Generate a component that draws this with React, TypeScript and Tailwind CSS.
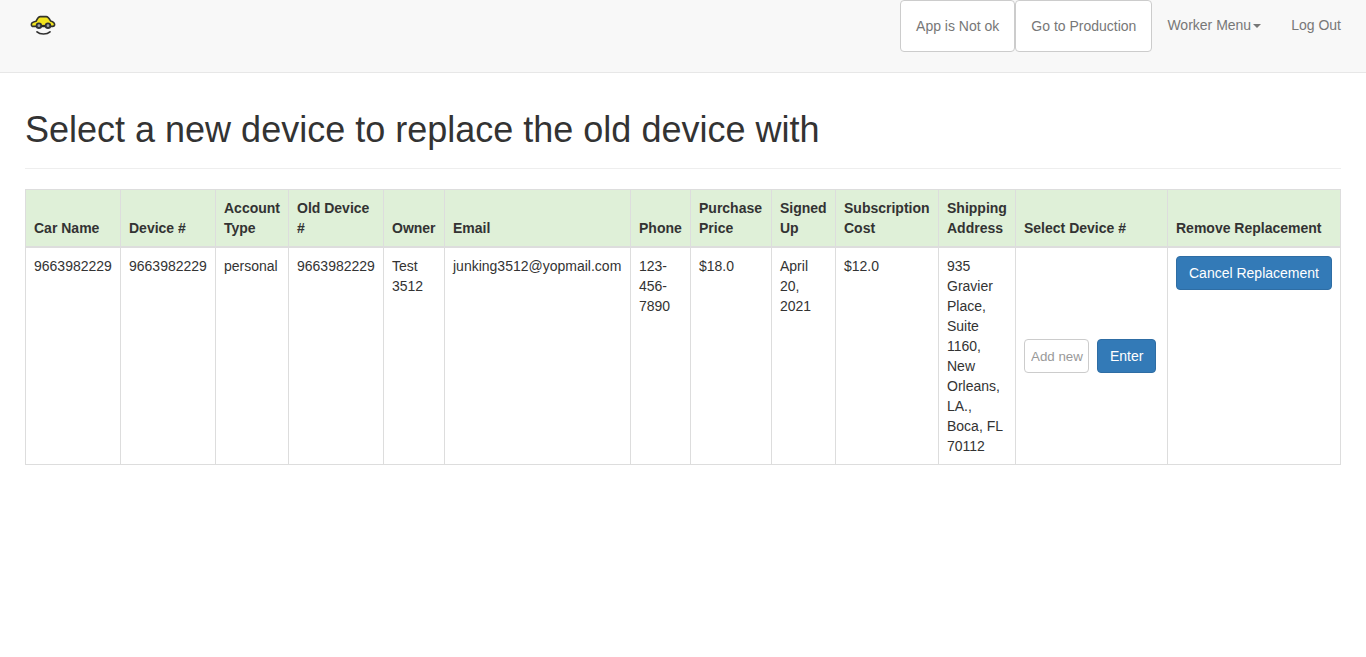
import React from "react";

const columns = [
  { label: "Car Name", width: "w-[95px]" },
  { label: "Device #", width: "w-[95px]" },
  { label: "Account Type", width: "w-[73px]" },
  { label: "Old Device #", width: "w-[95px]" },
  { label: "Owner", width: "w-[61px]" },
  { label: "Email", width: "w-[186px]" },
  { label: "Phone", width: "w-[60px]" },
  { label: "Purchase Price", width: "w-[81px]" },
  { label: "Signed Up", width: "w-[64px]" },
  { label: "Subscription Cost", width: "w-[103px]" },
  { label: "Shipping Address", width: "w-[77px]" },
  { label: "Select Device #", width: "w-[152px]" },
  { label: "Remove Replacement", width: "w-[173px]" },
];

const values = [
  "9663982229",
  "9663982229",
  "personal",
  "9663982229",
  "Test 3512",
  "junking3512@yopmail.com",
  "123-456-7890",
  "$18.0",
  "April 20, 2021",
  "$12.0",
  "935 Gravier Place, Suite 1160, New Orleans, LA., Boca, FL 70112",
];

function Logo() {
  return (
    <svg className="block h-[21px] w-[26px]" viewBox="0 0 26 21" fill="none">
      <path
        d="M1.4 9.4C1.4 7.4 3.2 6.9 6 6.3C7.4 3.2 8.4 1.6 10.4 1.6H16.2C18.2 1.6 19.4 3.6 20.6 6C23.2 6.8 24.6 7.6 24.6 9.6C24.6 11.2 24.2 11.4 22.6 11.4H3.4C1.8 11.4 1.4 11 1.4 9.4Z"
        fill="#f2e41f"
        stroke="#33332c"
        strokeWidth="1.6"
      />
      <path d="M10.5 10.8h6" stroke="#2b2b26" strokeWidth="1.8" />
      <circle cx="8.9" cy="10.7" r="2.3" fill="#9da1a4" stroke="#2f3133" strokeWidth="1.8" />
      <circle cx="18" cy="10.7" r="2.3" fill="#9da1a4" stroke="#2f3133" strokeWidth="1.8" />
      <path d="M7 16.8C10 19.7 17 19.7 20 16.8" stroke="#303030" strokeWidth="1.7" strokeLinecap="round" />
    </svg>
  );
}

function Navbar() {
  const boxed =
    "h-[52px] rounded border border-[#ccc] bg-white px-[15px] text-sm leading-5 text-[#777]";
  return (
    <nav className="flex h-[73px] items-start justify-between border-b border-[#e7e7e7] bg-[#f8f8f8] pr-[10px] pl-[30px]">
      <a href="#" className="pt-[15px]" aria-label="Home">
        <Logo />
      </a>
      <div className="flex items-start text-sm leading-5 text-[#777]">
        <button className={boxed}>App is Not ok</button>
        <button className={boxed}>Go to Production</button>
        <a href="#" className="flex items-center px-[15px] py-[15px]">
          Worker Menu
          <svg className="mt-[2px] ml-[2px] h-1 w-2" viewBox="0 0 8 4">
            <path d="M0 0h8L4 4Z" fill="#777" />
          </svg>
        </a>
        <a href="#" className="px-[15px] py-[15px]">
          Log Out
        </a>
      </div>
    </nav>
  );
}

export default function App() {
  const cell = "border border-[#ddd] p-2 text-left align-top";
  const primary =
    "h-[34px] rounded border border-[#2e6da4] bg-[#337ab7] px-3 text-sm leading-5 whitespace-nowrap text-white";
  return (
    <div className="min-h-screen bg-white font-['Liberation_Sans',Arial,sans-serif] text-sm leading-5 text-[#333]">
      <Navbar />
      <main className="px-[25px] pt-[37px]">
        <header className="mb-5 border-b border-[#eee] pb-[19px]">
          <h1 className="h-[39px] text-[36px] leading-[39.6px] font-medium">
            Select a new device to replace the old device with
          </h1>
        </header>
        <table className="w-[1316px] table-fixed border-collapse">
          <colgroup>
            {columns.map((c) => (
              <col key={c.label} className={c.width} />
            ))}
          </colgroup>
          <thead>
            <tr className="bg-[#dff0d8]">
              {columns.map((c) => (
                <th
                  key={c.label}
                  className="border border-b-2 border-[#ddd] p-2 text-left align-bottom font-bold"
                >
                  {c.label}
                </th>
              ))}
            </tr>
          </thead>
          <tbody>
            <tr>
              {values.map((v, i) => (
                <td key={i} className={cell}>
                  {v}
                </td>
              ))}
              <td className="border border-[#ddd] p-2 align-middle">
                <form className="flex gap-2">
                  <input
                    className="h-[34px] w-[65px] rounded border border-[#ccc] bg-white pr-1 pl-[6px] text-[13.333px] placeholder:text-[#999]"
                    placeholder="Add new"
                  />
                  <button type="button" className={primary}>
                    Enter
                  </button>
                </form>
              </td>
              <td className={cell}>
                <button className={primary}>Cancel Replacement</button>
              </td>
            </tr>
          </tbody>
        </table>
      </main>
    </div>
  );
}
